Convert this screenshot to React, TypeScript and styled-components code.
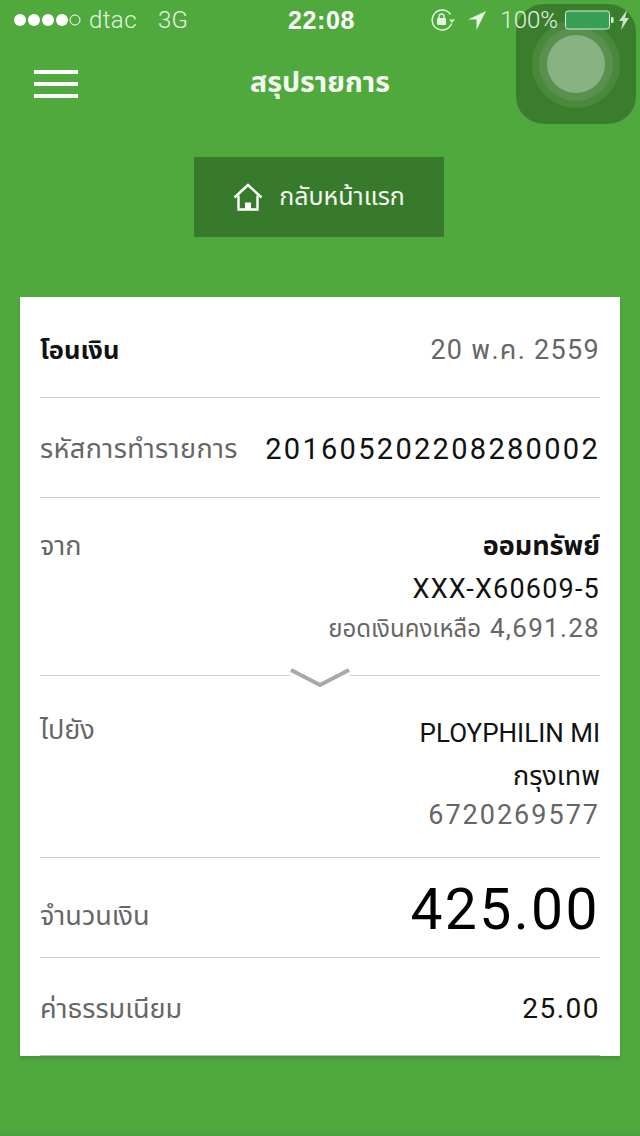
import React from "react";
import styled, { createGlobalStyle } from "styled-components";

const GlobalStyle = createGlobalStyle`
  html, body {
    margin: 0;
    padding: 0;
    background: #4fa93d;
  }
  * {
    box-sizing: border-box;
  }
`;

const FONT = `"Liberation Sans", "Noto Sans", "Noto Sans Thai", "DejaVu Sans", sans-serif`;

const Page = styled.div`
  position: relative;
  width: 640px;
  height: 1136px;
  overflow: hidden;
  background: #4fa93d;
  font-family: ${FONT};
  color: #fff;
`;

const BottomShade = styled.div`
  position: absolute;
  left: 0;
  right: 0;
  bottom: 0;
  height: 8px;
  background: linear-gradient(rgba(0, 0, 0, 0), rgba(0, 0, 0, 0.07));
`;

const StatusBar = styled.div`
  position: relative;
  z-index: 2;
  display: grid;
  grid-template-columns: 1fr auto 1fr;
  align-items: center;
  height: 40px;
  padding: 0 10px 0 13px;
  font-size: 24px;
`;

const StatusLeft = styled.div`
  display: flex;
  align-items: center;
  color: #e4f2e0;
`;

const Carrier = styled.span`
  margin-left: 8px;
  font-family: Roboto, sans-serif;
  font-weight: 300;
  letter-spacing: 0.4px;
`;

const Network = styled(Carrier)`
  margin-left: 21px;
`;

const Clock = styled.div`
  font-family: "Liberation Sans", sans-serif;
  font-weight: 700;
  font-size: 25px;
  letter-spacing: 0.6px;
`;

const StatusRight = styled.div`
  display: flex;
  align-items: center;
  justify-content: flex-end;
  color: #e4f2e0;
`;

const Percent = styled.span`
  margin: 0 7px 0 14px;
  font-family: Roboto, sans-serif;
  font-weight: 300;
`;

const NavBar = styled.header`
  position: relative;
  display: flex;
  align-items: center;
  justify-content: center;
  height: 84px;
`;

const Hamburger = styled.div`
  position: absolute;
  left: 34px;
  top: 30px;
  display: flex;
  flex-direction: column;
  gap: 8px;
  width: 44px;
`;

const HamburgerLine = styled.span`
  display: block;
  height: 4px;
  background: #fff;
`;

const NavTitle = styled.h1`
  margin: 0;
  font-size: 28.5px;
  font-weight: 700;
  line-height: 40px;
  color: #f3f9f1;
`;

const ButtonRow = styled.div`
  display: flex;
  justify-content: center;
  padding: 33px 2px 0 0;
`;

const HomeButton = styled.button`
  display: flex;
  align-items: center;
  justify-content: center;
  gap: 16px;
  width: 250px;
  height: 80px;
  padding: 0;
  border: 0;
  background: #387a2c;
  color: #f3f9f1;
  font-family: ${FONT};
  font-size: 25px;
`;

const Card = styled.section`
  margin: 60px 20px 0;
  height: 759px;
  padding: 0 20px;
  background: #fff;
  box-shadow: 0 3px 3px rgba(0, 0, 0, 0.12);
`;

const Row = styled.div<{ $height: number; $last?: boolean }>`
  position: relative;
  display: flex;
  justify-content: space-between;
  height: ${(p) => p.$height}px;
  border-bottom: 1px solid ${(p) => (p.$last ? "#b9bdb9" : "#cfcfcf")};
`;

const InlineRow = styled(Row)<{ $top?: number }>`
  align-items: center;
  padding-top: ${(p) => p.$top ?? 0}px;
`;

const StackRow = styled(Row)<{ $top: number }>`
  align-items: flex-start;
  padding-top: ${(p) => p.$top}px;
`;

const Label = styled.span<{ $strong?: boolean; $pad?: number }>`
  padding-top: ${(p) => p.$pad ?? 0}px;
  font-size: ${(p) => (p.$strong ? 25.5 : 27)}px;
  line-height: 36px;
  font-weight: ${(p) => (p.$strong ? 700 : 400)};
  color: ${(p) => (p.$strong ? "#111" : "#666")};
`;

const WideLabel = styled(Label)`
  letter-spacing: 0.4px;
`;

const Value = styled.span<{ $muted?: boolean; $size?: number; $spacing?: number }>`
  font-family: Roboto, ${FONT};
  font-size: ${(p) => p.$size ?? 28}px;
  line-height: 36px;
  letter-spacing: ${(p) => p.$spacing ?? 1.5}px;
  color: ${(p) => (p.$muted ? "#666" : "#111")};
`;

const ValueStack = styled.div`
  display: flex;
  flex-direction: column;
  align-items: flex-end;
`;

const StackLine = styled.div<{
  $size?: number;
  $muted?: boolean;
  $strong?: boolean;
  $height?: number;
  $spacing?: number;
}>`
  font-family: Roboto, ${FONT};
  font-size: ${(p) => p.$size ?? 26}px;
  line-height: ${(p) => p.$height ?? 43}px;
  font-weight: ${(p) => (p.$strong ? 700 : 400)};
  letter-spacing: ${(p) => p.$spacing ?? 0}px;
  color: ${(p) => (p.$muted ? "#666" : "#111")};
  white-space: nowrap;
`;

const BalanceDigits = styled.span`
  margin-left: 3px;
  font-size: 26px;
  letter-spacing: 1.3px;
`;

const Amount = styled.span`
  font-family: Roboto, sans-serif;
  font-size: 57px;
  letter-spacing: 2.4px;
  line-height: 70px;
  color: #000;
`;

const ChevronWrap = styled.div`
  position: absolute;
  left: 250px;
  bottom: -14px;
  display: flex;
  justify-content: center;
  width: 60px;
  height: 28px;
  background: #fff;
`;

const AssistiveTouch = styled.div`
  position: absolute;
  z-index: 1;
  left: 516px;
  top: 4px;
  display: flex;
  align-items: center;
  justify-content: center;
  width: 120px;
  height: 120px;
  border-radius: 28px;
  background: rgba(45, 100, 35, 0.62);
`;

const TouchRing = styled.div<{ $size: number; $alpha: number }>`
  display: flex;
  align-items: center;
  justify-content: center;
  width: ${(p) => p.$size}px;
  height: ${(p) => p.$size}px;
  border-radius: 50%;
  background: rgba(255, 255, 255, ${(p) => p.$alpha});
`;

const RotationIcon = () => (
  <svg width="24" height="22" viewBox="0 0 24 22" fill="none">
    <path d="M19.5 5.5A10 10 0 1 0 20.5 14.5" stroke="#e4f2e0" strokeWidth="1.4" />
    <path d="M18 10.5h6l-3 3.6z" fill="#e4f2e0" />
    <rect x="6" y="9" width="9" height="7" rx="1" fill="#e4f2e0" />
    <path d="M8 9V7.4a2.5 2.5 0 0 1 5 0V9" stroke="#e4f2e0" strokeWidth="1.5" />
  </svg>
);

const LocationIcon = () => (
  <svg width="18" height="19" viewBox="0 0 18 19" style={{ marginLeft: 13 }}>
    <path d="M18 0L0 8.5h8.5V19z" fill="#e4f2e0" />
  </svg>
);

const BatteryIcon = () => (
  <svg width="65" height="20" viewBox="0 0 65 20">
    <rect x="0.5" y="1" width="44" height="18" rx="2.5" fill="#37a056" stroke="#dcecd8" />
    <rect x="46" y="7" width="2.5" height="6" rx="1" fill="#dcecd8" />
    <path d="M62 0l-8 11h4l-2 9 8-12h-4z" fill="#cfe2ca" />
  </svg>
);

const SignalDots = () => (
  <svg width="68" height="14" viewBox="0 0 68 14">
    {[7, 21, 35, 49].map((cx) => (
      <circle key={cx} cx={cx} cy="7" r="6" fill="#fff" />
    ))}
    <circle cx="62" cy="7" r="5" fill="none" stroke="#fff" strokeWidth="1" />
  </svg>
);

const HomeIcon = () => (
  <svg width="30" height="28" viewBox="0 0 30 28" fill="none" stroke="#fff" strokeWidth="2.4">
    <path d="M1.5 14.5L15 2l13.5 12.5" />
    <path d="M5.5 12.5V26.5h19V12.5" />
    <path d="M12 26.5v-7h6v7" fill="#fff" stroke="none" />
  </svg>
);

const Chevron = () => (
  <svg width="60" height="28" viewBox="0 0 60 28" fill="none">
    <path d="M1 9L30 24L59 9" stroke="#a9a9a9" strokeWidth="4" />
  </svg>
);

export default function App() {
  return (
    <Page>
      <GlobalStyle />
      <StatusBar>
        <StatusLeft>
          <SignalDots />
          <Carrier>dtac</Carrier>
          <Network>3G</Network>
        </StatusLeft>
        <Clock>22:08</Clock>
        <StatusRight>
          <RotationIcon />
          <LocationIcon />
          <Percent>100%</Percent>
          <BatteryIcon />
        </StatusRight>
      </StatusBar>

      <NavBar>
        <Hamburger>
          <HamburgerLine />
          <HamburgerLine />
          <HamburgerLine />
        </Hamburger>
        <NavTitle>สรุปรายการ</NavTitle>
      </NavBar>

      <ButtonRow>
        <HomeButton>
          <HomeIcon />
          กลับหน้าแรก
        </HomeButton>
      </ButtonRow>

      <Card>
        <InlineRow $height={101} $top={6}>
          <Label $strong>โอนเงิน</Label>
          <Value $muted $size={27} $spacing={1.3}>20 พ.ค. 2559</Value>
        </InlineRow>
        <InlineRow $height={100} $top={2}>
          <WideLabel>รหัสการทำรายการ</WideLabel>
          <Value $size={29} $spacing={2.3}>201605202208280002</Value>
        </InlineRow>
        <StackRow $height={178} $top={27}>
          <Label $pad={3}>จาก</Label>
          <ValueStack>
            <StackLine $strong $size={27}>ออมทรัพย์</StackLine>
            <StackLine $size={27} $spacing={1.2}>XXX-X60609-5</StackLine>
            <StackLine $size={24} $muted $height={35}>
              ยอดเงินคงเหลือ <BalanceDigits>4,691.28</BalanceDigits>
            </StackLine>
          </ValueStack>
          <ChevronWrap>
            <Chevron />
          </ChevronWrap>
        </StackRow>
        <StackRow $height={182} $top={36}>
          <Label>ไปยัง</Label>
          <ValueStack>
            <StackLine>PLOYPHILIN MI</StackLine>
            <StackLine $size={27}>กรุงเทพ</StackLine>
            <StackLine $size={27} $muted $height={35} $spacing={2}>6720269577</StackLine>
          </ValueStack>
        </StackRow>
        <InlineRow $height={100} $top={4}>
          <Label $pad={12}>จำนวนเงิน</Label>
          <Amount>425.00</Amount>
        </InlineRow>
        <InlineRow $height={98} $top={4} $last>
          <Label>ค่าธรรมเนียม</Label>
          <Value>25.00</Value>
        </InlineRow>
      </Card>

      <AssistiveTouch>
        <TouchRing $size={88} $alpha={0.08}>
          <TouchRing $size={74} $alpha={0.08}>
            <TouchRing $size={58} $alpha={0.3} />
          </TouchRing>
        </TouchRing>
      </AssistiveTouch>
      <BottomShade />
    </Page>
  );
}
